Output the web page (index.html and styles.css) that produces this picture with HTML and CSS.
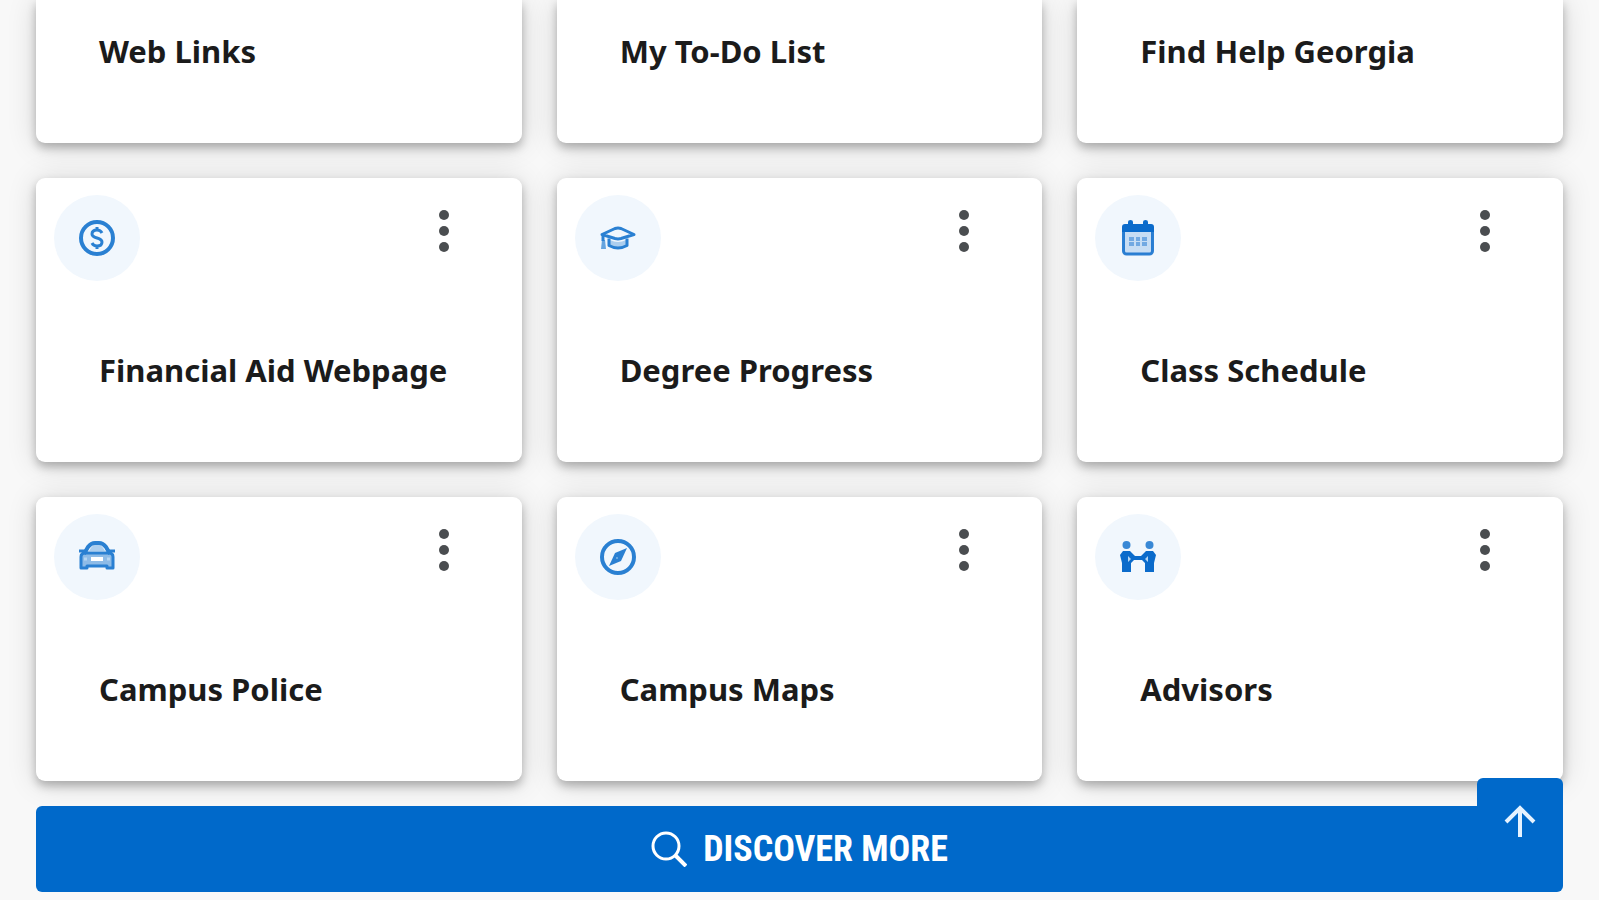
FILE: index.html
```html
<!DOCTYPE html>
<html lang="en">
<head>
    <meta charset="UTF-8">
    <meta name="viewport" content="width=device-width, initial-scale=1.0">
    <title>Discover</title>
    <link rel="stylesheet" href="styles.css">
</head>
<body>
    <main class="container">
        <div class="cards">
            <article class="card card-short">
                <h2>Web Links</h2>
            </article>
            <article class="card card-short">
                <h2>My To-Do List</h2>
            </article>
            <article class="card card-short">
                <h2>Find Help Georgia</h2>
            </article>

            <article class="card">
                <div class="card-top">
                    <span class="card-icon">
                        <svg viewBox="0 0 36 36" fill="none" stroke="currentColor">
                            <circle cx="18" cy="18" r="16" stroke-width="4"/>
                            <path d="M23 13c-1-2-3-3-5-3-3 0-5 1.500-5 4 0 5 10 3 10 8 0 2.500-2 4-5 4-2.500 0-4-1-5-3M18 7v4M18 25v4" stroke-width="3"/>
                        </svg>
                    </span>
                    <button class="menu" type="button" aria-label="Card options"><i></i><i></i><i></i></button>
                </div>
                <h2>Financial Aid Webpage</h2>
            </article>
            <article class="card">
                <div class="card-top">
                    <span class="card-icon">
                        <svg viewBox="0 0 36 36" fill="none" stroke="currentColor" stroke-linejoin="round">
                            <path d="M2 14.500 15 8.500q3-1 6 0l13 6-13 4q-3 .8-6 0z" stroke-width="3"/>
                            <path d="M9 18.500v7q9 5 18 0v-7" stroke-width="3"/>
                            <path d="M10 20q8 4 16 0v5q-8 4-16 0z" fill="currentColor" fill-opacity=".35" stroke="none"/>
                            <path d="M3 15v6" stroke-width="3"/>
                            <path d="M2 20h3l1 9H1z" fill="currentColor" fill-opacity=".7" stroke="none"/>
                        </svg>
                    </span>
                    <button class="menu" type="button" aria-label="Card options"><i></i><i></i><i></i></button>
                </div>
                <h2>Degree Progress</h2>
            </article>
            <article class="card">
                <div class="card-top">
                    <span class="card-icon card-icon-strong">
                        <svg viewBox="0 0 36 36" fill="currentColor">
                            <rect x="3.500" y="6" width="29" height="28" rx="3" fill-opacity=".18" stroke="currentColor" stroke-opacity=".85" stroke-width="3"/>
                            <path d="M2 12V7q0-3 3-3h3V2q0-2 2.500-2T13 2v2h10V2q0-2 2.500-2T28 2v2h3q3 0 3 3v5z"/>
                            <path d="M9 17h5v4H9zM16 17h4v4h-4zM22 17h5v4h-5zM9 22h5v4H9zM16 22h4v4h-4zM22 22h5v4h-5z" fill-opacity=".45"/>
                        </svg>
                    </span>
                    <button class="menu" type="button" aria-label="Card options"><i></i><i></i><i></i></button>
                </div>
                <h2>Class Schedule</h2>
            </article>

            <article class="card">
                <div class="card-top">
                    <span class="card-icon">
                        <svg viewBox="0 0 36 36" fill="none" stroke="currentColor" stroke-linejoin="round">
                            <path d="M5 15 9 8q3-4 7-4h4q4 0 7 4l4 7" stroke-width="4"/>
                            <path d="M10 12q3-6 6-6h4q3 0 6 6z" fill="currentColor" fill-opacity=".35" stroke="none"/>
                            <path d="M0 12h6M30 12h6" stroke-width="3"/>
                            <path d="M2 29V18q0-4 4-4h24q4 0 4 4v11h-6v-2H8v2z" fill="currentColor" fill-opacity=".5" stroke-width="3"/>
                            <path d="M12 18h12v4H12z" fill="#fff" stroke="none"/>
                            <path d="M5 20h3M28 20h3" stroke="#b5d6f3" stroke-width="3"/>
                        </svg>
                    </span>
                    <button class="menu" type="button" aria-label="Card options"><i></i><i></i><i></i></button>
                </div>
                <h2>Campus Police</h2>
            </article>
            <article class="card">
                <div class="card-top">
                    <span class="card-icon">
                        <svg viewBox="0 0 36 36" fill="currentColor">
                            <circle cx="18" cy="18" r="16" fill="none" stroke="currentColor" stroke-width="4"/>
                            <path d="M27 9 21 22 9 27l6-13z"/>
                            <circle cx="17" cy="19" r="1" fill="#7db4e6"/>
                        </svg>
                    </span>
                    <button class="menu" type="button" aria-label="Card options"><i></i><i></i><i></i></button>
                </div>
                <h2>Campus Maps</h2>
            </article>
            <article class="card">
                <div class="card-top">
                    <span class="card-icon card-icon-strong">
                        <svg viewBox="0 0 36 36" fill="currentColor">
                            <circle cx="6.500" cy="6" r="4" fill-opacity=".8"/>
                            <circle cx="29.500" cy="6" r="4" fill-opacity=".8"/>
                            <path d="M3 12h7l5 5h6l5-5h7l3 4-2 8v9h-9v-9l-3-3h-8l-3 3v9H2v-9l-2-8z"/>
                            <path d="M8 17v6l3-3zM28 17v6l-3-3z" fill="#b5d6f3"/>
                        </svg>
                    </span>
                    <button class="menu" type="button" aria-label="Card options"><i></i><i></i><i></i></button>
                </div>
                <h2>Advisors</h2>
            </article>
        </div>

        <button class="discover" type="button">
            <svg viewBox="0 0 36 36" fill="none" stroke="currentColor" stroke-width="3">
                <circle cx="15" cy="15" r="13"/>
                <path d="M24 24 35 35" stroke-width="4"/>
            </svg>
            Discover More
        </button>
    </main>

    <a class="to-top" href="#" aria-label="Back to top">
        <svg viewBox="0 0 32 32" fill="none" stroke="currentColor" stroke-width="4">
            <path d="M16 32V3M2 17 16 3l14 14"/>
        </svg>
    </a>
</body>
</html>
```
FILE: styles.css
```css
* {
    margin: 0;
    padding: 0;
    box-sizing: border-box;
}

body {
    background-color: #f8f8f8;
    color: #1b1b1b;
    font-family: "Noto Sans", sans-serif;
}

.container {
    padding: 0 36px 8px;
}

/* Card grid */
.cards {
    display: grid;
    grid-template-columns: repeat(3, 1fr);
    gap: 35px;
    margin-bottom: 25px;
}

.card {
    min-height: 284px;
    padding: 17px 18px 68px;
    display: flex;
    flex-direction: column;
    justify-content: space-between;
    background-color: #fff;
    border-radius: 9px;
    box-shadow: 0 5px 10px rgba(0, 0, 0, 0.26), 0 2px 30px rgba(0, 0, 0, 0.14);
}

.card-short {
    min-height: 143px;
    justify-content: flex-end;
    border-radius: 0 0 9px 9px;
}

.card h2 {
    padding-left: 45px;
    font-size: 31px;
    font-weight: 700;
    line-height: 48px;
}

.card-top {
    display: flex;
    justify-content: space-between;
    align-items: flex-start;
    padding-right: 44px;
}

.card-icon {
    width: 86px;
    height: 86px;
    display: flex;
    align-items: center;
    justify-content: center;
    border-radius: 50%;
    background-color: #f1f7fd;
    color: #2a80d2;
}

.card-icon-strong {
    color: #0b6bcb;
}

.card-icon svg {
    width: 36px;
    height: 36px;
}

/* Three dot menu */
.menu {
    width: 32px;
    height: 72px;
    display: flex;
    flex-direction: column;
    align-items: center;
    justify-content: center;
    gap: 6px;
    border: none;
    background: none;
    cursor: pointer;
}

.menu i {
    width: 10px;
    height: 10px;
    border-radius: 50%;
    background-color: #4a4d50;
}

/* Discover bar */
.discover {
    width: 100%;
    height: 86px;
    display: flex;
    align-items: center;
    justify-content: center;
    gap: 16px;
    border: none;
    border-radius: 6px;
    background-color: #0069ca;
    color: #fff;
    font-family: "Roboto Condensed", Roboto, sans-serif;
    font-size: 36px;
    font-weight: 700;
    text-transform: uppercase;
    cursor: pointer;
}

.discover svg {
    width: 36px;
    height: 36px;
}

.to-top {
    position: fixed;
    right: 36px;
    bottom: 36px;
    width: 86px;
    height: 86px;
    display: flex;
    align-items: center;
    justify-content: center;
    border-radius: 6px;
    background-color: #0069ca;
    color: #e6f3ff;
}

.to-top svg {
    width: 32px;
    height: 32px;
}
```
